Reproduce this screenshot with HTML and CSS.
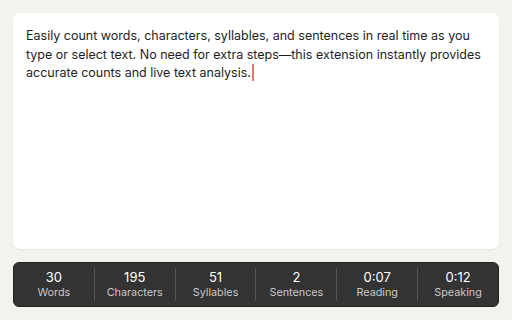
FILE: index.html
```html
<!DOCTYPE HTML>
<html lang="en">
<head>
    <meta name="viewport" content="width=device-width, initial-scale=1">
    <title>Word Counter</title>
    <link rel="stylesheet" href="styles.css">
</head>
<body>
    <div class="editor">
        <p class="editor-text">Easily count words, characters, syllables, and sentences in real time as you type or select text. No need for extra steps—this extension instantly provides accurate counts and live text analysis.<span class="caret"></span></p>
    </div>
    <div class="stats">
        <div class="stat"><span class="stat-num">30</span><span class="stat-label">Words</span></div>
        <div class="stat"><span class="stat-num">195</span><span class="stat-label">Characters</span></div>
        <div class="stat"><span class="stat-num">51</span><span class="stat-label">Syllables</span></div>
        <div class="stat"><span class="stat-num">2</span><span class="stat-label">Sentences</span></div>
        <div class="stat"><span class="stat-num">0:07</span><span class="stat-label">Reading</span></div>
        <div class="stat"><span class="stat-num">0:12</span><span class="stat-label">Speaking</span></div>
    </div>
</body>
</html>
```

FILE: styles.css
```css
html, body {
    margin: 0;
    height: 100%;
}
body {
    box-sizing: border-box;
    display: flex;
    flex-direction: column;
    gap: 13px;
    padding: 13px 13px 13px 13px;
    background: #f3f2ee;
    font-family: Inter, "Noto Sans", sans-serif;
}
.editor {
    flex: 1;
    background: white;
    border-radius: 7px;
    box-shadow: 0px 1px 1px rgba(0, 0, 0, 0.06);
    padding: 14px 13px 12px;
}
.editor-text {
    margin: 0;
    font-size: 12.5px;
    line-height: 18.5px;
    color: #1e1e1e;
}
.caret {
    display: inline-block;
    width: 2px;
    height: 17px;
    margin-left: 1px;
    vertical-align: -4px;
    background: #e2776a;
}
.stats {
    height: 45px;
    box-sizing: border-box;
    display: flex;
    align-items: center;
    background: #333333;
    border: 1px solid #222;
    border-radius: 6px;
}
.stat {
    flex: 1;
    display: flex;
    flex-direction: column;
    align-items: center;
    border-left: 1px solid #555;
    padding: 1px 0;
}
.stat:first-child {
    border-left: none;
}
.stat-num {
    font-size: 13px;
    line-height: 16px;
    color: white;
}
.stat-label {
    font-size: 10.8px;
    line-height: 15px;
    color: #c8c8c8;
}
```
